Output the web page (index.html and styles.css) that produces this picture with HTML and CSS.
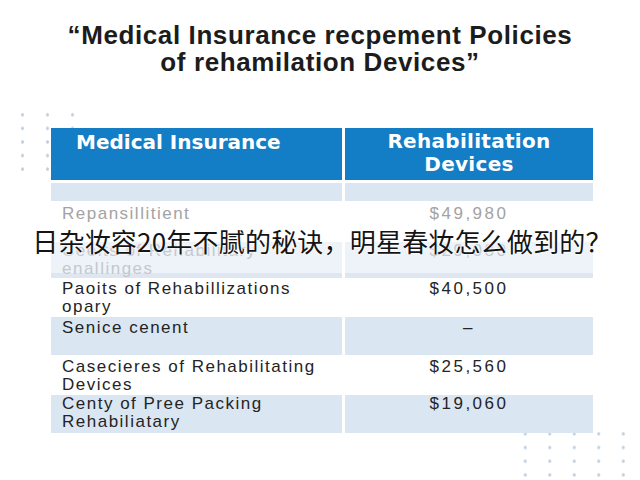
FILE: index.html
```html
<!DOCTYPE html>
<html lang="zh">
<head>
<meta charset="utf-8">
<title>Medical Insurance Policies</title>
<link rel="stylesheet" href="styles.css">
</head>
<body>
<div class="page">
  <div class="dots dots-tl"></div>
  <div class="dots dots-br"></div>
  <h1 class="title">“Medical Insurance recpement Policies<br>of rehamilation Devices”</h1>
  <div class="table">
    <div class="cell head head-left">Medical Insurance</div>
    <div class="cell head head-right">Rehabilitation<br>Devices</div>

    <div class="cell light"></div>
    <div class="cell light"></div>

    <div class="cell name faded r1">Repansillitient</div>
    <div class="cell num faded r1">$49,980</div>

    <div class="cell name light fade2 r2">Ceelts of Rehabilitary<br>enallinges</div>
    <div class="cell num light fade2 r2">$29,080</div>

    <div class="cell name r3">Paoits of Rehabillizations<br>opary</div>
    <div class="cell num r3">$40,500</div>

    <div class="cell name light r4">Senice cenent</div>
    <div class="cell num light r4">–</div>

    <div class="cell name r5">Casecieres of Rehabilitating<br>Devices</div>
    <div class="cell num r5">$25,560</div>

    <div class="cell name light r6">Centy of Pree Packing<br>Rehabiliatary</div>
    <div class="cell num light r6">$19,060</div>
  </div>
  <div class="caption">日杂妆容20年不腻的秘诀，明星春妆怎么做到的？</div>
</div>
</body>
</html>
```

FILE: styles.css
```css
* { box-sizing: border-box; }
html, body {
  margin: 0;
  padding: 0;
  background: #ffffff;
}
body {
  width: 640px;
  height: 480px;
  overflow: hidden;
}
.page {
  position: relative;
  width: 640px;
  height: 480px;
  padding-top: 22px;
  font-family: "Liberation Sans", Arial, sans-serif;
}
.title {
  margin: 0;
  text-align: center;
  font-family: "Liberation Sans", Arial, sans-serif;
  font-weight: bold;
  font-size: 26px;
  line-height: 27px;
  letter-spacing: 0.6px;
  color: #1c1c1c;
}
.dots {
  position: absolute;
  z-index: 0;
  background-image: radial-gradient(circle, #c3d2e2 1.4px, transparent 1.9px);
}
.dots-tl {
  left: 9.5px;
  top: 108px;
  width: 75px;
  height: 68px;
  background-size: 25px 13.6px;
}
.dots-br {
  left: 512.5px;
  top: 426.5px;
  width: 123px;
  height: 56px;
  background-size: 24.5px 13.7px;
}
.table {
  position: relative;
  z-index: 1;
  margin: 52px 0 0 51px;
  width: 542px;
  display: grid;
  grid-template-columns: 291px 248px;
  grid-template-rows: 55px 18px 41px 36px 39px 38px 40px 38px;
  column-gap: 3px;
}
.cell {
  font-size: 17px;
  line-height: 18px;
  color: #242424;
  padding-top: 3px;
}
.head {
  height: 52px;
  background: #137dc6;
  color: #ffffff;
  font-family: "DejaVu Sans", "Liberation Sans", sans-serif;
  font-weight: bold;
  font-size: 20px;
  line-height: 20px;
  padding-top: 4px;
}
.head-left { padding-left: 25px; }
.head-right {
  text-align: center;
  font-size: 20px;
  line-height: 23px;
  padding-top: 2px;
  letter-spacing: 0.3px;
}
.light { background: #dbe6f3; }
.name {
  padding-left: 11px;
  letter-spacing: 1.5px;
}
.num {
  text-align: center;
  letter-spacing: 2.5px;
}
.faded { color: #a3a3a3; }
.fade2 {
  color: #c4c8cd;
  background: linear-gradient(#eef3f9 0, #eef3f9 31px, #dde6f1 31px);
}
.r1 { padding-top: 4px; }
.r2 { padding-top: 0; }
.r3 { padding-top: 2px; }
.r4 { padding-top: 2px; }
.r5 { padding-top: 3px; }
.r6 { padding-top: 0; }
.caption {
  position: absolute;
  z-index: 2;
  left: 4px;
  right: 0;
  top: 226px;
  text-align: center;
  font-family: "Noto Sans CJK SC", sans-serif;
  font-weight: 400;
  font-size: 26px;
  line-height: 30px;
  letter-spacing: 0.2px;
  color: #141414;
  text-shadow: 0 0 2px #ffffff, 0 0 2px #ffffff, 0 0 3px #ffffff;
}
```
